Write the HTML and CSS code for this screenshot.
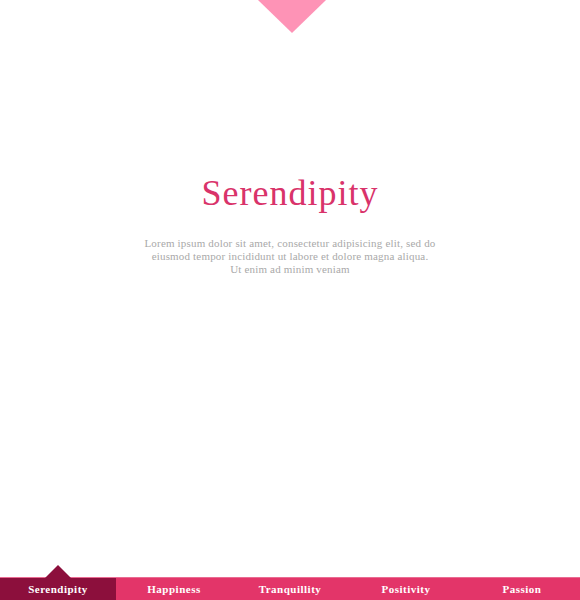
FILE: index.html
```html
<!DOCTYPE html>
<html>
<head>
<meta charset="utf-8">
<link rel="stylesheet" href="styles.css">
</head>
<body>
<div class="page">
  <div class="top-marker"></div>
  <main class="content">
    <h1 class="title">Serendipity</h1>
    <p class="text">Lorem ipsum dolor sit amet, consectetur adipisicing elit, sed do eiusmod tempor incididunt ut labore et dolore magna aliqua.<br>Ut enim ad minim veniam</p>
  </main>
  <nav class="nav">
    <a class="nav-item active">Serendipity</a>
    <a class="nav-item">Happiness</a>
    <a class="nav-item">Tranquillity</a>
    <a class="nav-item">Positivity</a>
    <a class="nav-item">Passion</a>
  </nav>
</div>
</body>
</html>
```
FILE: styles.css
```css
html, body {
  margin: 0;
  padding: 0;
  background: #fff;
}
.page {
  height: 600px;
  display: flex;
  flex-direction: column;
  font-family: "Liberation Serif", serif;
}
.top-marker {
  align-self: center;
  margin-left: 4px;
  width: 0;
  height: 0;
  border-left: 34px solid transparent;
  border-right: 34px solid transparent;
  border-top: 33px solid #fe93b6;
}
.content {
  flex: 1;
  display: flex;
  flex-direction: column;
  align-items: center;
  padding-top: 138px;
}
.title {
  margin: 0;
  font-size: 36px;
  font-weight: normal;
  color: #d9336a;
  letter-spacing: 1px;
  line-height: 44px;
}
.text {
  margin: 22px 0 0;
  width: 296px;
  text-align: center;
  font-size: 11px;
  line-height: 13px;
  letter-spacing: 0.18px;
  color: #a9a9a9;
}
.nav {
  display: grid;
  grid-template-columns: repeat(5, 1fr);
  height: 22px;
  background: #e33569;
  border-top: 1px solid #ea6b92;
}
.nav-item {
  position: relative;
  display: flex;
  align-items: center;
  justify-content: center;
  color: #fff;
  font-size: 11px;
  font-weight: bold;
  letter-spacing: 0.5px;
}
.nav-item.active {
  background: #8c0f3c;
}
.nav-item.active::before {
  content: "";
  position: absolute;
  left: 50%;
  top: -13px;
  margin-left: -13px;
  border-left: 13px solid transparent;
  border-right: 13px solid transparent;
  border-bottom: 13px solid #8c0f3c;
}
```
